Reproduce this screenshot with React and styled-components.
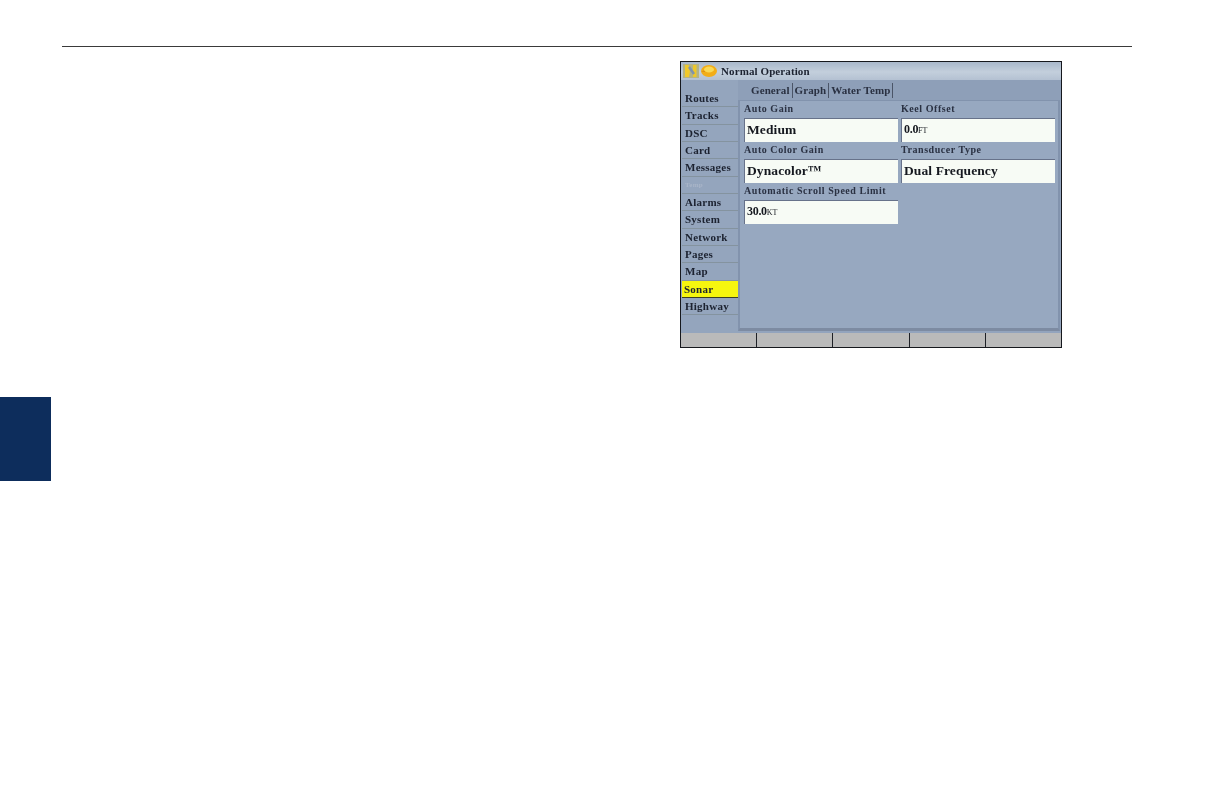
import React from "react";
import styled, { createGlobalStyle } from "styled-components";

const GlobalStyle = createGlobalStyle`
  html, body {
    margin: 0;
    background: #fff;
  }
`;

const Page = styled.div`
  width: 1224px;
  height: 796px;
  overflow: hidden;
  background: #fff;
  display: flex;
  flex-direction: column;
`;

const HeaderRule = styled.div`
  height: 1px;
  margin: 46px 92px 0 62px;
  background: #3a3a3a;
`;

const Screen = styled.div`
  box-sizing: border-box;
  width: 382px;
  height: 287px;
  margin: 14px 0 0 680px;
  border: 1px solid #16181d;
  display: flex;
  flex-direction: column;
  background: #93a4bd;
  font-family: "Liberation Serif", serif;
  color: #1c2230;
  filter: blur(0.55px);
`;

const TitleBar = styled.div`
  height: 18px;
  flex: none;
  display: flex;
  align-items: center;
  gap: 3px;
  padding-left: 2px;
  background: linear-gradient(#a9b8cb, #c3cfdc 55%, #b4c1d2);
  font-size: 11px;
  font-weight: bold;
  letter-spacing: 0.1px;
  white-space: nowrap;
`;

const Body = styled.div`
  flex: 1;
  display: flex;
  min-height: 0;
`;

const SideMenu = styled.div`
  width: 57px;
  flex: none;
  padding: 10px 0 0 1px;
  box-sizing: border-box;
  background: #94a5bd;
`;

const MenuItem = styled.div`
  box-sizing: border-box;
  height: 17.35px;
  line-height: 16px;
  padding-left: ${(p) => (p.$active ? "2px" : "3px")};
  font-size: 11px;
  font-weight: bold;
  letter-spacing: 0.25px;
  white-space: nowrap;
  border-bottom: 1px solid ${(p) => (p.$active ? "#3d4020" : "#84939f")};
  background: ${(p) => (p.$active ? "#f6f60e" : "transparent")};
  color: ${(p) => (p.$dim ? "#a9b5c8" : "#1c2230")};
  ${(p) => p.$dim && "font-size: 7px;"}
`;

const Content = styled.div`
  flex: 1;
  display: flex;
  flex-direction: column;
  min-width: 0;
`;

const TabRow = styled.div`
  height: 20px;
  flex: none;
  display: flex;
  align-items: flex-end;
  padding: 0 0 2px 13px;
  box-sizing: border-box;
  background: #8e9fb8;
`;

const Tab = styled.div`
  padding: 0 2px 0 0;
  margin-right: 2px;
  height: 15px;
  line-height: 15px;
  font-size: 11px;
  font-weight: bold;
  letter-spacing: 0.1px;
  color: #2a3142;
  border-right: 1px solid #4b5568;
`;

const Panel = styled.div`
  flex: 1;
  margin: 0 1px 2px 0;
  padding: 2px 5px 0 4px;
  background: #97a8c0;
  border-left: 2px solid #8293ad;
  border-top: 1px solid #8293ad;
  border-bottom: 3px solid #7d8ba2;
  border-right: 2px solid #8293ad;
  display: grid;
  grid-template-columns: 154px 154px;
  grid-auto-rows: 41px;
  column-gap: 3px;
  align-content: start;
`;

const Field = styled.div`
  display: flex;
  flex-direction: column;
  min-width: 0;
`;

const FieldLabel = styled.div`
  height: 15px;
  line-height: 12px;
  font-size: 10px;
  font-weight: bold;
  letter-spacing: 0.55px;
  color: #2a3142;
  white-space: nowrap;
`;

const FieldValue = styled.div`
  box-sizing: border-box;
  height: 24px;
  padding-left: 2px;
  line-height: 21px;
  background: #f7fbf5;
  border-top: 1px solid #67728a;
  border-left: 1px solid #67728a;
  font-size: ${(p) => (p.$small ? "12px" : "13.5px")};
  font-weight: bold;
  color: #15181f;
  white-space: nowrap;
  letter-spacing: ${(p) => (p.$small ? "-0.3px" : "0.1px")};
`;

const Unit = styled.span`
  font-size: 8px;
  font-weight: normal;
  letter-spacing: 0;
`;

const SoftKeys = styled.div`
  height: 14px;
  flex: none;
  display: grid;
  grid-template-columns: 76px 76px 77px 76px 1fr;
  background: #bababa;
`;

const SoftKey = styled.div`
  border-right: 1px solid #1d2026;
  &:last-child {
    border-right: 0;
  }
`;

const SectionTab = styled.div`
  width: 51px;
  height: 84px;
  margin-top: 49px;
  background: #0d2d5c;
`;

const menu = [
  "Routes",
  "Tracks",
  "DSC",
  "Card",
  "Messages",
  "Temp",
  "Alarms",
  "System",
  "Network",
  "Pages",
  "Map",
  "Sonar",
  "Highway",
];

const StatusIcons = () => (
  <svg width="35" height="16" viewBox="0 0 35 16" style={{ flex: "none" }}>
    <rect x="0" y="1" width="16" height="14" fill="#b4b384" />
    <path d="M2 2h3.500l1.500 6-1 6H2z" fill="#f1c92a" />
    <path d="M10 2h3.500v12H10z" fill="#ecc62b" />
    <path d="M6 4l5 7" stroke="#7f93ad" strokeWidth="2.500" />
    <ellipse cx="26" cy="8" rx="8" ry="6" fill="#f2ad17" />
    <path d="M18 8.500l4-1.500V9z" fill="#d98f12" />
    <ellipse cx="26" cy="6.500" rx="5" ry="3" fill="#f9d955" />
  </svg>
);

export default function App() {
  return (
    <Page>
      <GlobalStyle />
      <HeaderRule />
      <Screen>
        <TitleBar>
          <StatusIcons />
          <span>Normal Operation</span>
        </TitleBar>
        <Body>
          <SideMenu>
            {menu.map((name) => (
              <MenuItem key={name} $active={name === "Sonar"} $dim={name === "Temp"}>
                {name}
              </MenuItem>
            ))}
          </SideMenu>
          <Content>
            <TabRow>
              <Tab>General</Tab>
              <Tab>Graph</Tab>
              <Tab>Water Temp</Tab>
            </TabRow>
            <Panel>
              <Field>
                <FieldLabel>Auto Gain</FieldLabel>
                <FieldValue>Medium</FieldValue>
              </Field>
              <Field>
                <FieldLabel>Keel Offset</FieldLabel>
                <FieldValue $small>
                  0.0<Unit>FT</Unit>
                </FieldValue>
              </Field>
              <Field>
                <FieldLabel>Auto Color Gain</FieldLabel>
                <FieldValue>Dynacolor™</FieldValue>
              </Field>
              <Field>
                <FieldLabel>Transducer Type</FieldLabel>
                <FieldValue>Dual Frequency</FieldValue>
              </Field>
              <Field>
                <FieldLabel>Automatic Scroll Speed Limit</FieldLabel>
                <FieldValue $small>
                  30.0<Unit>KT</Unit>
                </FieldValue>
              </Field>
            </Panel>
          </Content>
        </Body>
        <SoftKeys>
          <SoftKey />
          <SoftKey />
          <SoftKey />
          <SoftKey />
          <SoftKey />
        </SoftKeys>
      </Screen>
      <SectionTab />
    </Page>
  );
}
